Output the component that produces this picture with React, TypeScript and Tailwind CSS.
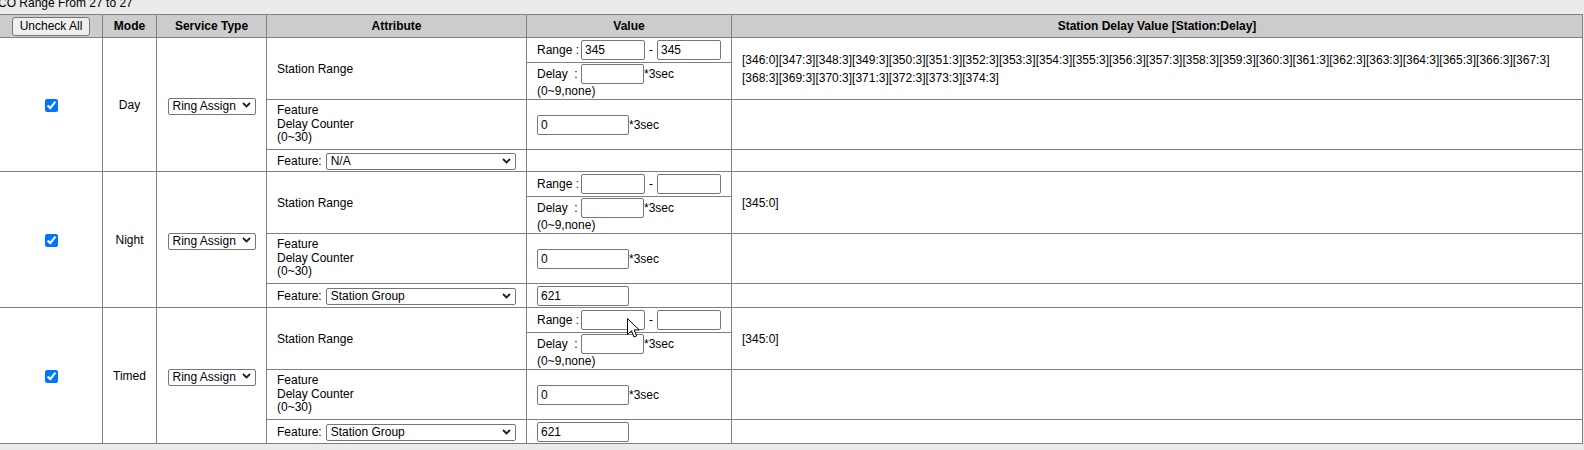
import { Fragment } from "react";

type Block = {
  mode: string;
  rangeFrom: string;
  rangeTo: string;
  delayValues: string[];
  feature: string;
  featureValue: string | null;
  lastRowH: string;
};

const dayValues = [
  "[346:0]",
  ...Array.from({ length: 28 }, (_, i) => `[${347 + i}:3]`),
];

const BLOCKS: Block[] = [
  {
    mode: "Day",
    rangeFrom: "345",
    rangeTo: "345",
    delayValues: dayValues,
    feature: "N/A",
    featureValue: null,
    lastRowH: "h-[22px]",
  },
  {
    mode: "Night",
    rangeFrom: "",
    rangeTo: "",
    delayValues: ["[345:0]"],
    feature: "Station Group",
    featureValue: "621",
    lastRowH: "h-[24px]",
  },
  {
    mode: "Timed",
    rangeFrom: "",
    rangeTo: "",
    delayValues: ["[345:0]"],
    feature: "Station Group",
    featureValue: "621",
    lastRowH: "h-[24px]",
  },
];

const cell = "border border-[#808080] align-middle";

function Chevron() {
  return (
    <svg
      className="pointer-events-none absolute right-[5px] top-1/2 -translate-y-1/2"
      width="9"
      height="6"
      viewBox="0 0 9 6"
      aria-hidden="true"
    >
      <path d="M1 1l3.5 3.5L8 1" fill="none" stroke="#1f1f1f" strokeWidth="1.8" />
    </svg>
  );
}

function Select({ value, wide }: { value: string; wide?: boolean }) {
  return (
    <span
      className={`relative inline-block h-[17px] align-middle ${
        wide ? "w-[190px]" : "w-[88px]"
      }`}
    >
      <select
        defaultValue={value}
        className="h-full w-full appearance-none rounded-[2px] border border-[#767676] bg-white pl-[4px] text-left text-[12px] leading-[15px] text-black outline-none"
      >
        <option>{value}</option>
      </select>
      <Chevron />
    </span>
  );
}

function TextBox({ value, className }: { value: string; className: string }) {
  return (
    <input
      type="text"
      defaultValue={value}
      className={`h-[20px] rounded-[2px] border border-[#767676] bg-white px-[3px] align-middle text-[12px] text-black outline-none ${className}`}
    />
  );
}

// pointeur de souris visible sur la capture
function Cursor() {
  return (
    <svg
      className="pointer-events-none absolute left-[627px] top-[318px]"
      width="13"
      height="21"
      viewBox="0 0 13 21"
      aria-hidden="true"
    >
      <path
        d="M0.5 0.5 L0.5 16.5 L4.5 12.8 L7 19 L9.6 17.9 L7.1 11.9 L12.2 11.9 Z"
        fill="#fff"
        stroke="#000"
        strokeWidth="1"
      />
    </svg>
  );
}

function ModeBlock({ block }: { block: Block }) {
  return (
    <>
      <tr className="h-[25px]">
        <td rowSpan={4} className={`${cell} text-center`}>
          <input
            type="checkbox"
            defaultChecked
            className="h-[13px] w-[13px] align-middle accent-[#0075ff]"
          />
        </td>
        <td rowSpan={4} className={`${cell} text-center`}>
          {block.mode}
        </td>
        <td rowSpan={4} className={`${cell} text-center`}>
          <Select value="Ring Assign" />
        </td>
        <td rowSpan={2} className={`${cell} pl-[10px]`}>
          Station Range
        </td>
        <td className={`${cell} pl-[10px]`}>
          <span className="inline-block w-[44px] align-middle">Range :</span>
          <TextBox value={block.rangeFrom} className="w-[64px]" />
          <span className="mx-[4px] align-middle">-</span>
          <TextBox value={block.rangeTo} className="w-[64px]" />
        </td>
        <td rowSpan={2} className={`${cell} pl-[10px] pr-[10px]`}>
          {block.delayValues.map((v, i) => (
            <Fragment key={i}>
              {v}
              <wbr />
            </Fragment>
          ))}
        </td>
      </tr>
      <tr className="h-[37px]">
        <td className={`${cell} pl-[10px]`}>
          <div>
            <span className="inline-block w-[44px] align-middle">Delay&nbsp;&nbsp;:</span>
            <TextBox value="" className="w-[63px]" />
            <span className="align-middle">*3sec</span>
          </div>
          <div className="leading-[14px]">(0~9,none)</div>
        </td>
      </tr>
      <tr className="h-[50px]">
        <td className={`${cell} pl-[10px] leading-[13.5px]`}>
          Feature
          <br />
          Delay Counter
          <br />
          (0~30)
        </td>
        <td className={`${cell} pl-[10px]`}>
          <TextBox value="0" className="w-[92px]" />
          <span className="align-middle">*3sec</span>
        </td>
        <td className={cell} />
      </tr>
      <tr className={block.lastRowH}>
        <td className={`${cell} pl-[10px]`}>
          <span className="mr-[4px] align-middle">Feature:</span>
          <Select value={block.feature} wide />
        </td>
        <td className={`${cell} pl-[10px]`}>
          {block.featureValue !== null && (
            <TextBox value={block.featureValue} className="w-[92px]" />
          )}
        </td>
        <td className={cell} />
      </tr>
    </>
  );
}

export default function App() {
  return (
    <div className="relative h-[450px] w-[1584px] overflow-hidden bg-[#ebebeb] font-['Liberation_Sans',Arial,sans-serif] text-[12px] text-black">
      <div className="h-[14px] overflow-hidden">
        <div className="ml-[-2px] mt-[-4px] leading-[14px]">CO Range From 27 to 27</div>
      </div>
      <table className="ml-[-1px] w-[1584px] table-fixed border-collapse bg-white">
        <colgroup>
          <col className="w-[103px]" />
          <col className="w-[54px]" />
          <col className="w-[110px]" />
          <col className="w-[260px]" />
          <col className="w-[205px]" />
          <col />
        </colgroup>
        <thead>
          <tr className="h-[23px] bg-[#cccccc] font-bold">
            <th className={`${cell} text-center`}>
              <button
                type="button"
                className="h-[19px] w-[78px] rounded-[3px] border border-[#767676] bg-[#efefef] text-[12px] font-normal leading-[17px] text-black"
              >
                Uncheck All
              </button>
            </th>
            <th className={`${cell} text-center`}>Mode</th>
            <th className={`${cell} text-center`}>Service Type</th>
            <th className={`${cell} text-center`}>Attribute</th>
            <th className={`${cell} text-center`}>Value</th>
            <th className={`${cell} text-center`}>Station Delay Value [Station:Delay]</th>
          </tr>
        </thead>
        <tbody>
          {BLOCKS.map((b) => (
            <ModeBlock key={b.mode} block={b} />
          ))}
        </tbody>
      </table>
      <Cursor />
    </div>
  );
}
